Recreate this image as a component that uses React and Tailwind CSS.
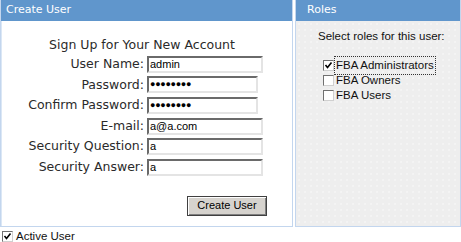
import React from 'react';

const font = { fontFamily: '"DejaVu Sans", Verdana, sans-serif' };
const arial = { fontFamily: '"Liberation Sans", Arial, sans-serif' };

function Box({ checked }) {
  return (
    <span className="inline-flex items-center justify-center w-[11px] h-[11px] border border-t-[#707070] border-l-[#707070] border-b-[#d0d0d0] border-r-[#d0d0d0] bg-white shrink-0">
      {checked && (
        <svg width="9" height="9" viewBox="0 0 9 9">
          <path d="M1.5 4 L3.5 6.5 L7.5 1.5" stroke="#000" strokeWidth="1.6" fill="none" />
        </svg>
      )}
    </span>
  );
}

function Field({ label, value, width, password }) {
  return (
    <div className="flex items-center h-[20.6px]">
      <div className="w-[145px] text-right pr-[3px] text-[12.5px] text-[#2a2a2a]">{label}</div>
      <div
        className="h-[17px] border-2 border-t-[#6a6a6a] border-l-[#6a6a6a] border-b-[#e4e4e4] border-r-[#e4e4e4] bg-white flex items-center pl-[1px] text-[11px] leading-none text-black"
        style={{ width, ...arial }}
      >
        {password ? <span className="text-[9px] tracking-[-0.3px]">●●●●●●●●</span> : value}
      </div>
    </div>
  );
}

export default function App() {
  return (
    <div className="w-[461px] h-[242px] bg-white overflow-hidden" style={font}>
      <div className="flex gap-[2px] h-[227px]">
        {/* Create User */}
        <div className="w-[293px] border border-[#c3d6ee] border-t-0 flex flex-col">
          <div className="h-[21px] bg-[#6096cc] text-white text-[11px] flex items-center pl-[5px]">Create User</div>
          <div className="flex-1 bg-white border-l border-[#dbe7f5]">
            <div className="text-center text-[12.5px] text-[#2a2a2a] pt-[15px] pr-[10px] h-[33px]">Sign Up for Your New Account</div>
            <Field label="User Name:" value="admin" width={116} />
            <Field label="Password:" password width={111} />
            <Field label="Confirm Password:" password width={111} />
            <Field label="E-mail:" value="a@a.com" width={116} />
            <Field label="Security Question:" value="a" width={116} />
            <Field label="Security Answer:" value="a" width={116} />
            <div className="flex justify-end pr-[25px] pt-[18px]">
              <button
                className="w-[80px] h-[20px] bg-[#d6d3ce] border border-[#404040] shadow-[inset_1px_1px_0_#fff,inset_-1px_-1px_0_#808080] text-[11px] text-black"
                style={arial}
              >
                Create User
              </button>
            </div>
          </div>
        </div>

        {/* Roles */}
        <div className="flex-1 border border-[#c3d6ee] border-t-0 flex flex-col">
          <div className="h-[21px] bg-[#6096cc] text-white text-[11px] flex items-center pl-[11px]">Roles</div>
          <div
            className="flex-1 bg-[#eeeeee] bg-[radial-gradient(#f8f8f8_0.6px,transparent_0.8px)] bg-[length:6px_6px] pl-[22px] pt-[7px] text-[11.5px] text-[#111]"
            style={arial}
          >
            <div className="mb-[14px] whitespace-nowrap">Select roles for this user:</div>
            <div className="flex flex-col gap-[3px] pl-[5px]">
              <label className="flex items-center gap-[1px] h-[12px]">
                <Box checked />
                <span className="outline outline-1 outline-dotted outline-[#333] px-[1px]">FBA Administrators</span>
              </label>
              <label className="flex items-center gap-[2px] h-[12px]">
                <Box />
                <span>FBA Owners</span>
              </label>
              <label className="flex items-center gap-[2px] h-[12px]">
                <Box />
                <span>FBA Users</span>
              </label>
            </div>
          </div>
        </div>
      </div>

      <label className="flex items-center gap-[3px] pl-[2px] pt-[4px] h-[15px] text-[11.5px] text-[#111]" style={arial}>
        <Box checked />
        <span>Active User</span>
      </label>
    </div>
  );
}
